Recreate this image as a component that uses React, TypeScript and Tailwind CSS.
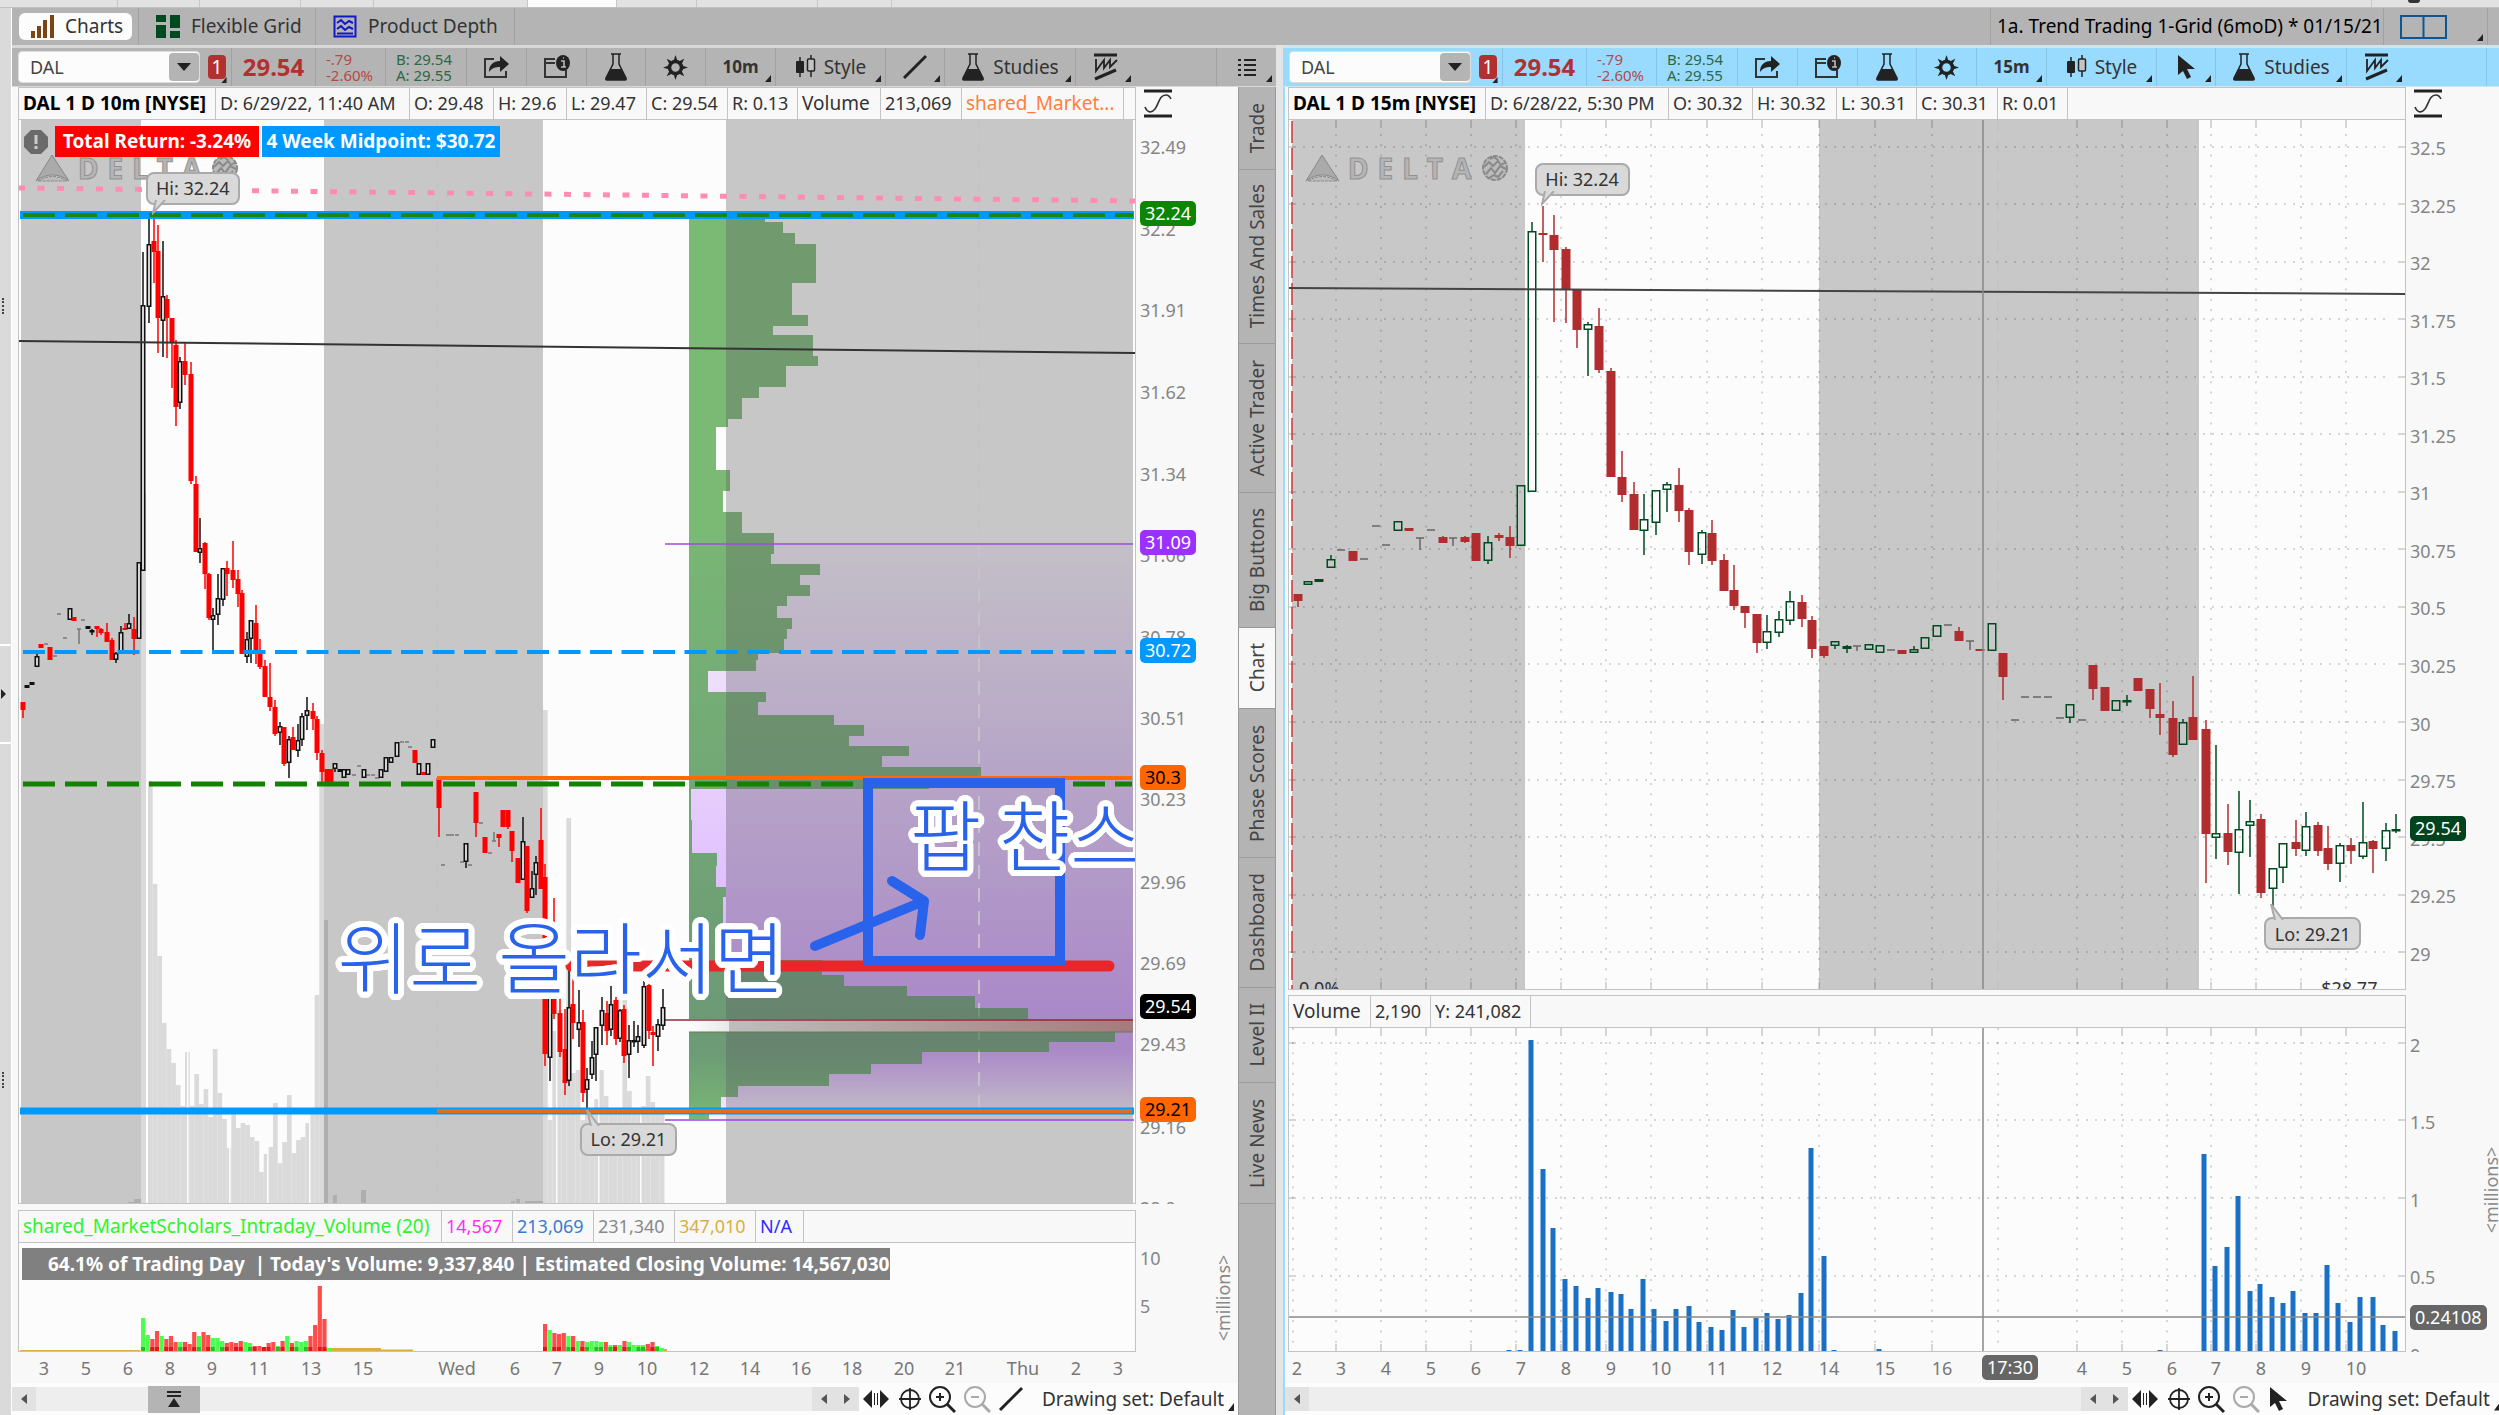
import React from "react";

type Frame = { x: number; y: number; w: number; h: number };
type Candle = [number, number, number, number, number, string];

const LEFT: Frame = { x: 18, y: 120, w: 1118, h: 1084 };
const LEFT_VOL: Frame = { x: 18, y: 1243, w: 1118, h: 109 };
const RIGHT: Frame = { x: 1288, y: 120, w: 1118, h: 870 };
const RIGHT_VOL: Frame = { x: 1288, y: 1028, w: 1118, h: 324 };

const px = (f: Frame, x: number) => ((x - f.x) / f.w) * 100 + "%";
const py = (f: Frame, y: number) => ((y - f.y) / f.h) * 100 + "%";
const box = (f: Frame) => `${f.x} ${f.y} ${f.w} ${f.h}`;

// x, high, body top, body bottom, low, kind (r = down, w = up)
const leftCandles: Candle[] = [
  [23, 702, 702, 710, 718, "r"], [27, 685, 685, 688, 688, "w"], [32, 682, 682, 685, 685, "w"], [37, 653, 656, 667, 667, "w"],
  [41, 644, 644, 648, 648, "r"], [50, 647, 647, 660, 660, "r"], [70, 608, 608, 620, 620, "w"], [74, 617, 617, 621, 621, "r"],
  [88, 626, 626, 629, 629, "w"], [92, 629, 630, 632, 635, "w"], [97, 626, 626, 629, 637, "r"], [101, 628, 629, 633, 635, "r"],
  [107, 623, 632, 642, 642, "r"], [112, 638, 640, 660, 660, "r"], [116, 652, 653, 660, 663, "w"], [121, 626, 632, 652, 652, "w"],
  [125, 623, 628, 630, 630, "r"], [129, 614, 623, 629, 629, "w"], [134, 617, 629, 639, 655, "r"], [139, 562, 562, 639, 639, "w"],
  [143, 252, 305, 571, 571, "w"], [149, 219, 244, 307, 323, "w"], [154, 215, 241, 252, 283, "r"], [158, 225, 251, 318, 353, "r"],
  [163, 241, 296, 321, 357, "w"], [167, 295, 299, 318, 358, "r"], [172, 318, 318, 343, 388, "r"], [176, 340, 345, 407, 426, "r"],
  [180, 357, 361, 403, 409, "w"], [185, 342, 361, 375, 385, "r"], [191, 362, 374, 481, 484, "r"], [196, 476, 484, 552, 552, "r"],
  [200, 518, 548, 553, 563, "w"], [205, 542, 543, 574, 589, "r"], [209, 573, 574, 618, 620, "r"], [213, 608, 615, 620, 651, "w"],
  [218, 574, 598, 615, 625, "w"], [223, 568, 568, 600, 606, "w"], [227, 561, 568, 574, 596, "r"], [233, 541, 570, 580, 588, "r"],
  [238, 570, 579, 594, 607, "r"], [242, 590, 593, 654, 654, "r"], [247, 632, 639, 657, 663, "w"], [251, 620, 620, 639, 663, "w"],
  [256, 605, 623, 654, 664, "r"], [260, 639, 654, 667, 669, "r"], [265, 660, 666, 697, 697, "r"], [270, 663, 697, 707, 711, "r"],
  [275, 700, 707, 734, 736, "r"], [280, 722, 726, 733, 745, "w"], [284, 727, 727, 764, 766, "r"], [289, 736, 739, 763, 778, "w"],
  [293, 727, 737, 750, 750, "r"], [298, 724, 740, 751, 757, "w"], [302, 713, 716, 740, 746, "w"], [307, 697, 710, 716, 730, "w"],
  [313, 703, 711, 719, 730, "r"], [317, 716, 719, 753, 760, "r"], [322, 750, 753, 772, 782, "r"], [327, 769, 769, 782, 782, "r"],
  [331, 769, 769, 782, 782, "r"], [335, 763, 763, 769, 772, "w"], [340, 769, 769, 772, 772, "w"], [344, 769, 769, 778, 778, "w"],
  [348, 769, 769, 775, 775, "w"], [364, 769, 769, 778, 778, "w"], [381, 769, 769, 778, 778, "w"], [386, 757, 757, 772, 772, "w"],
  [391, 757, 757, 763, 763, "w"], [397, 742, 742, 757, 757, "w"], [415, 750, 750, 763, 763, "r"], [419, 763, 763, 775, 775, "w"],
  [424, 772, 772, 775, 775, "r"], [428, 763, 763, 775, 775, "w"], [433, 739, 739, 748, 748, "w"], [439, 778, 778, 808, 837, "r"],
  [466, 843, 843, 862, 868, "w"], [476, 792, 792, 823, 837, "r"], [485, 837, 837, 853, 853, "r"], [499, 834, 834, 838, 847, "r"],
  [503, 810, 810, 827, 827, "r"], [508, 810, 810, 827, 829, "r"], [512, 831, 831, 851, 862, "r"], [518, 858, 858, 883, 883, "r"],
  [523, 817, 841, 880, 880, "w"], [527, 846, 846, 911, 913, "r"], [532, 871, 888, 898, 898, "w"], [536, 856, 862, 875, 895, "w"],
  [541, 808, 840, 889, 889, "r"], [545, 864, 877, 1054, 1066, "r"], [550, 960, 990, 1058, 1081, "w"], [554, 898, 960, 1014, 1019, "r"],
  [560, 990, 1013, 1052, 1057, "r"], [565, 1009, 1049, 1083, 1095, "r"], [569, 970, 1007, 1081, 1086, "w"], [573, 972, 1004, 1023, 1039, "r"],
  [579, 990, 1022, 1030, 1047, "w"], [583, 1010, 1022, 1093, 1102, "r"], [587, 1068, 1079, 1090, 1108, "w"], [592, 1041, 1057, 1075, 1079, "w"],
  [596, 1027, 1027, 1055, 1081, "w"], [602, 997, 1010, 1026, 1045, "w"], [607, 1001, 1013, 1031, 1045, "r"], [611, 986, 1004, 1030, 1036, "w"],
  [616, 997, 1000, 1039, 1045, "r"], [620, 1009, 1010, 1039, 1042, "w"], [624, 1005, 1009, 1056, 1063, "r"], [629, 1025, 1040, 1055, 1078, "w"],
  [634, 1021, 1040, 1042, 1047, "w"], [638, 1025, 1036, 1042, 1053, "w"], [644, 978, 986, 1046, 1048, "w"], [649, 970, 985, 1031, 1039, "r"],
  [653, 1026, 1032, 1035, 1066, "r"], [658, 1019, 1024, 1037, 1051, "w"], [663, 989, 1007, 1026, 1030, "w"],
];

const leftDojis: [number, number][] = [
  [46, 644], [55, 656], [59, 614], [65, 638], [79, 629], [83, 620], [354, 775], [359, 766], [368, 775], [373, 775], [377, 778],
  [402, 742], [407, 742], [410, 747], [443, 865], [448, 835], [452, 835], [457, 835], [462, 862], [470, 865], [481, 823], [490, 853], [494, 841],
];

const rightCandles: Candle[] = [
  [1298, 594, 594, 601, 607, "r"], [1308, 581, 581, 585, 585, "w"], [1319, 579, 579, 582, 582, "w"], [1331, 555, 559, 568, 568, "w"],
  [1353, 551, 551, 561, 561, "r"], [1398, 521, 521, 531, 531, "w"], [1409, 528, 528, 531, 531, "r"], [1443, 536, 537, 543, 543, "r"],
  [1465, 536, 537, 542, 543, "r"], [1476, 533, 533, 561, 561, "r"], [1488, 536, 542, 561, 564, "w"], [1499, 533, 535, 538, 541, "r"],
  [1510, 526, 537, 546, 558, "r"], [1521, 485, 485, 546, 546, "w"], [1532, 222, 231, 492, 492, "w"], [1543, 206, 233, 235, 262, "r"],
  [1554, 215, 235, 250, 322, "r"], [1566, 247, 249, 289, 323, "r"], [1577, 290, 290, 330, 348, "r"], [1588, 322, 324, 330, 376, "w"],
  [1599, 308, 326, 370, 373, "r"], [1611, 368, 371, 477, 477, "r"], [1622, 451, 477, 495, 502, "r"], [1634, 482, 494, 530, 530, "r"],
  [1644, 494, 519, 531, 555, "w"], [1656, 490, 490, 523, 535, "w"], [1667, 482, 484, 490, 512, "w"], [1679, 468, 485, 511, 522, "r"],
  [1689, 508, 510, 552, 565, "r"], [1702, 530, 532, 555, 564, "w"], [1712, 520, 533, 561, 565, "r"], [1724, 554, 560, 591, 591, "r"],
  [1734, 565, 590, 606, 610, "r"], [1745, 606, 606, 613, 628, "r"], [1757, 614, 614, 643, 653, "r"], [1767, 615, 631, 643, 649, "w"],
  [1779, 611, 619, 633, 637, "w"], [1790, 591, 601, 621, 625, "w"], [1802, 595, 602, 619, 627, "r"], [1812, 616, 620, 649, 658, "r"],
  [1824, 646, 646, 656, 658, "r"], [1835, 641, 641, 646, 649, "w"], [1847, 645, 646, 649, 653, "w"], [1869, 644, 644, 650, 650, "w"],
  [1880, 645, 645, 653, 653, "w"], [1902, 650, 650, 654, 654, "r"], [1914, 646, 649, 653, 653, "w"], [1925, 637, 637, 649, 649, "w"],
  [1937, 625, 625, 637, 637, "w"], [1959, 627, 631, 641, 641, "r"], [1980, 649, 649, 651, 651, "r"], [1992, 623, 623, 651, 651, "w"],
  [2003, 653, 653, 677, 700, "r"], [2070, 704, 704, 718, 723, "w"], [2093, 665, 665, 689, 700, "r"], [2105, 687, 687, 711, 711, "r"],
  [2116, 700, 700, 711, 711, "w"], [2127, 695, 700, 702, 706, "w"], [2138, 678, 678, 691, 691, "r"], [2150, 689, 689, 709, 718, "r"],
  [2160, 683, 714, 718, 735, "r"], [2173, 701, 718, 755, 757, "r"], [2183, 719, 722, 745, 745, "w"], [2193, 676, 717, 740, 740, "r"],
  [2206, 720, 729, 834, 883, "r"], [2216, 745, 833, 838, 859, "w"], [2228, 804, 833, 852, 865, "r"], [2239, 791, 829, 853, 894, "w"],
  [2250, 800, 821, 826, 857, "w"], [2261, 814, 819, 893, 898, "r"], [2273, 868, 868, 889, 906, "w"], [2283, 843, 843, 868, 883, "w"],
  [2296, 820, 842, 849, 856, "r"], [2306, 812, 826, 851, 856, "w"], [2318, 822, 825, 851, 856, "r"], [2328, 826, 848, 864, 870, "r"],
  [2340, 843, 845, 864, 882, "w"], [2351, 838, 845, 851, 864, "r"], [2363, 802, 842, 857, 859, "w"], [2373, 840, 841, 849, 873, "r"],
  [2386, 823, 830, 849, 861, "w"], [2396, 814, 829, 831, 833, "w"],
];

const rightDojis: [number, number, number?][] = [
  [1341, 550], [1364, 559], [1376, 526], [1386, 545], [1420, 538, 12], [1431, 530], [1453, 538, 8], [1857, 646, 5], [1891, 650],
  [1948, 625], [1970, 641, 9], [2015, 720], [2025, 697], [2037, 697], [2048, 697], [2060, 718], [2082, 720],
];

const backVolumeA = [781, 884, 956, 1023, 1049, 1063, 1085, 1106, 1052, 1106, 1074, 1104, 1089, 1117, 1049, 1093, 1119, 1148, 1114, 1128, 1123, 1125, 1137, 1141, 1172, 1154, 1147, 1103, 1163, 1142, 1095, 1153, 1140, 1137, 1123, 1114, 995, 724];
const backVolumeB = [710, 1120, 1031, 1010, 1080, 818, 1073, 1070, 1120, 1110, 1110, 1099, 1070, 1096, 1113, 1113, 1113, 992, 1091, 1113, 1113, 1106, 1076, 1102, 1113, 1113];

// volume profile rows: top, right edge
const profile: [number, number][] = [
  [216, 765], [222, 783], [233, 795], [244, 816], [283, 792], [315, 808], [326, 773], [335, 813], [356, 818], [366, 786], [387, 759],
  [398, 742], [419, 728], [427, 716], [470, 730], [491, 723], [512, 742], [533, 774], [554, 771], [564, 820], [575, 800], [585, 810],
  [596, 787], [606, 777], [618, 792], [629, 787], [639, 784], [653, 758], [660, 756], [671, 708], [692, 766], [702, 758], [715, 834],
  [725, 864], [736, 849], [746, 909], [756, 882], [767, 981], [779, 929], [789, 691], [820, 692], [853, 717], [866, 716], [887, 726],
  [897, 723], [927, 728], [960, 822], [975, 844], [986, 907], [996, 975], [1008, 1028], [1019, 1028], [1032, 1115], [1042, 1049],
  [1052, 922], [1064, 871], [1074, 829], [1086, 738], [1097, 721], [1113, 709],
];
const profilePath =
  "M689 216" + profile.map(([y, x], i) => `V${y}H${x}V${profile[i + 1] ? profile[i + 1][0] : 1119}`).join("").replace("V216", "") + "H689Z";

const sessionVolumeA = "g33 g16 r12 r20 g15 r12 r15 r9 g9 r9 r7 r19 g15 r19 r16 g13 g13 g10 r8 r9 r8 r10 g9 g8 r5 r5 r4 r8 r9 g5 r10 g15 r8 g10 g9 g10 r15 r26 r65 r32 g3".split(" ");
const sessionVolumeB = "r27 g21 r18 r17 r18 g15 r15 g10 r10 g9 g10 g10 g9 r9 g6 r6 g6 r10 g9 g6 g6 g6 r7 r9 g5 g3".split(" ");

const rightVolume: [number, number][] = [
  [1509, 1350], [1520, 1350], [1531, 1040], [1543, 1169], [1553, 1228], [1565, 1279], [1576, 1286], [1588, 1298], [1598, 1288],
  [1611, 1292], [1621, 1294], [1631, 1309], [1643, 1279], [1654, 1309], [1666, 1321], [1676, 1309], [1689, 1306], [1699, 1322],
  [1711, 1327], [1722, 1330], [1733, 1310], [1744, 1327], [1756, 1318], [1767, 1313], [1778, 1319], [1789, 1315], [1801, 1293],
  [1811, 1148], [1824, 1256], [1834, 1350], [1879, 1349], [2160, 1350], [2204, 1154], [2215, 1266], [2227, 1247], [2238, 1196],
  [2250, 1291], [2260, 1284], [2272, 1297], [2283, 1303], [2293, 1291], [2305, 1313], [2316, 1313], [2327, 1265], [2338, 1303],
  [2350, 1322], [2360, 1297], [2373, 1297], [2383, 1325], [2395, 1331],
];

const gridX = [1336, 1381, 1426, 1471, 1516, 1561, 1606, 1651, 1707, 1762, 1819, 1875, 1932, 2077, 2122, 2167, 2211, 2256, 2301, 2346];
const gridY = Array.from({ length: 15 }, (_, i) => Math.round(146.5 + i * 57.55));

const leftPrices: [string, number][] = [
  ["32.49", 147], ["32.2", 229], ["31.91", 310], ["31.62", 392], ["31.34", 474], ["31.06", 555], ["30.78", 637], ["30.51", 718],
  ["30.23", 799], ["29.96", 882], ["29.69", 963], ["29.43", 1044], ["29.16", 1127], ["28.9", 1208],
];
const leftTags: [string, number, string][] = [
  ["32.24", 213, "bg-[#0d8500] text-white"], ["31.09", 542, "bg-[#9b30ff] text-white"], ["30.72", 650, "bg-[#0099ff] text-white"],
  ["30.3", 777, "bg-[#ff6600] text-black"], ["29.54", 1006, "bg-black text-white"], ["29.21", 1109, "bg-[#ff6600] text-black"],
];
const rightPrices: [string, number][] = Array.from({ length: 15 }, (_, i) => [String(32.5 - i * 0.25), Math.round(148 + i * 57.55)]);

const leftTimes: [string, number][] = [
  ["3", 44], ["5", 86], ["6", 128], ["8", 170], ["9", 212], ["11", 259], ["13", 311], ["15", 363], ["Wed", 457], ["6", 515], ["7", 557],
  ["9", 599], ["10", 647], ["12", 699], ["14", 750], ["16", 801], ["18", 852], ["20", 904], ["21", 955], ["Thu", 1023], ["2", 1076], ["3", 1118],
];
const rightTimes: [string, number][] = [
  ["2", 1297], ["3", 1341], ["4", 1386], ["5", 1431], ["6", 1476], ["7", 1521], ["8", 1566], ["9", 1611], ["10", 1661], ["11", 1717],
  ["12", 1772], ["14", 1829], ["15", 1885], ["16", 1942], ["4", 2082], ["5", 2127], ["6", 2172], ["7", 2216], ["8", 2261], ["9", 2306], ["10", 2356],
];

const sideTabs: [string, string][] = [
  ["Trade", "h-[83px]"], ["Times And Sales", "h-[174px]"], ["Active Trader", "h-[149px]"], ["Big Buttons", "h-[135px]"], ["Chart", "h-[81px]"],
  ["Phase Scores", "h-[149px]"], ["Dashboard", "h-[130px]"], ["Level II", "h-[95px]"], ["Live News", "h-[121px]"],
];

/* ---------- icons ---------- */

const ShareIcon = () => (
  <svg width="27" height="24" viewBox="0 0 27 24">
    <path d="M11 4H2v18h21v-6" fill="none" stroke="#333" strokeWidth="2" />
    <path d="M6 17c0-7 4-11 11-11V1l9 8-9 8v-5c-5 0-8 1-11 5z" fill="#222" />
  </svg>
);
const NoteIcon = () => (
  <svg width="27" height="24" viewBox="0 0 27 24">
    <path d="M12 4H2v18h21v-7M2 8h10" fill="none" stroke="#333" strokeWidth="2" />
    <ellipse cx="20" cy="8" rx="7" ry="8" fill="#222" />
    <path d="M18 6h3v6M18 12h5M20 3h1" stroke="#bbb" strokeWidth="1.6" fill="none" />
  </svg>
);
const FlaskIcon = () => (
  <svg width="24" height="28" viewBox="0 0 24 28">
    <path d="M7 1h10M9 1v10L2 25c-.5 1.500 0 2 1 2h18c1 0 1.500-.5 1-2L15 11V1" fill="none" stroke="#222" strokeWidth="1.500" />
    <path d="M7 16h10l5 9c.5 1.500 0 2-1 2H3c-1 0-1.500-.5-1-2z" fill="#222" />
  </svg>
);
const GearIcon = () => (
  <svg width="25" height="25" viewBox="0 0 25 25">
    <circle cx="12.500" cy="12.500" r="6" fill="none" stroke="#222" strokeWidth="3.500" />
    {[0, 45, 90, 135, 180, 225, 270, 315].map((a) => (
      <path key={a} d="M10.500 6 12.500 0l2 6z" fill="#222" transform={`rotate(${a} 12.5 12.5)`} />
    ))}
  </svg>
);
const CandleIcon = () => (
  <svg width="21" height="24" viewBox="0 0 21 24">
    <path d="M5 2v20M16 0v22" stroke="#222" strokeWidth="1.500" />
    <rect x="1" y="6" width="8" height="12" rx="1" fill="#222" />
    <rect x="12.500" y="4" width="7" height="12" rx="1" fill="#c4c4c4" stroke="#222" strokeWidth="1.500" />
  </svg>
);
const PenIcon = () => (
  <svg width="26" height="26" viewBox="0 0 26 26">
    <path d="M2 24 24 2" stroke="#222" strokeWidth="3" />
  </svg>
);
const CursorIcon = () => (
  <svg width="19" height="24" viewBox="0 0 19 24">
    <path d="M1 0v20l5-4 4 8 4-2-4-8h8z" fill="#222" />
  </svg>
);
const PatternIcon = () => (
  <svg width="25" height="28" viewBox="0 0 25 28">
    <path d="M1 2h23" stroke="#222" strokeWidth="3" />
    <path d="M3 6v12l8-11v8l6-8v7l7-7" fill="none" stroke="#222" strokeWidth="1.800" />
    <path d="M2 26l21-9" stroke="#222" strokeWidth="3" />
  </svg>
);
const ListIcon = () => (
  <svg width="18" height="19" viewBox="0 0 18 19">
    <path d="M0 2h3M0 7h3M0 12h3M0 17h3M6 2h12M6 7h12M6 12h12M6 17h12" stroke="#222" strokeWidth="2" />
  </svg>
);
const WaveIcon = () => (
  <svg width="28" height="30" viewBox="0 0 28 30">
    <path d="M0 2h28M0 27h28" stroke="#222" strokeWidth="3" />
    <path d="M1 18c2 5 6 7 10 2s4-14 11-14c2 0 4 2 5 4" fill="none" stroke="#333" strokeWidth="1.600" />
  </svg>
);
const Corner = () => (
  <svg width="6" height="7" viewBox="0 0 6 7" className="absolute right-1 bottom-1">
    <path d="M6 0v7H0z" fill="#222" />
  </svg>
);
const ZoomIcon = ({ minus }: { minus?: boolean }) => (
  <svg width="28" height="28" viewBox="0 0 28 28" fill="none" stroke={minus ? "#aaa" : "#222"} strokeWidth="2">
    <circle cx="12" cy="12" r="10" />
    <path d="m19 19 8 8" strokeWidth="3" />
    <path d={minus ? "M8 12h8" : "M8 12h8M12 8v8"} />
  </svg>
);

/* ---------- toolbar ---------- */

const Cell = ({ w, children }: { w: string; children?: React.ReactNode }) => (
  <div className={`relative flex h-full shrink-0 items-center justify-center border-r border-black/10 ${w}`}>{children}</div>
);
const ToolButton = ({ w, label, corner, children }: { w: string; label: string; corner?: boolean; children: React.ReactNode }) => (
  <button aria-label={label} className={`relative flex h-full shrink-0 items-center justify-center gap-2 border-r border-black/10 ${w}`}>
    {children}
    {corner && <Corner />}
  </button>
);

function Toolbar({ period, active }: { period: string; active?: boolean }) {
  return (
    <div className={`flex h-[42px] items-center border-t-[3px] border-b ${active ? "border-[#d0e4ee] bg-[#99dbff]" : "border-[#d8d8d8] bg-[#b4b4b4]"}`}>
      <div className="flex h-full w-[220px] shrink-0 items-center border-r border-black/10 pl-[6px]">
        <div className="flex h-8 w-[182px] items-center rounded-sm border border-[#ddd] bg-[#fcfcfc]">
          <input aria-label="Symbol" defaultValue="DAL" className="w-full min-w-0 flex-1 bg-transparent pl-[11px] text-[18px] text-[#444] outline-none" />
          <button aria-label="Open symbol list" className="flex h-7 w-[30px] items-center justify-center rounded-sm bg-[#b4b4b4]">
            <svg width="14" height="8" viewBox="0 0 14 8"><path d="M0 0h14L7 8z" fill="#222" /></svg>
          </button>
        </div>
        <button aria-label="Link color" className="relative ml-2 h-6 w-[18px] rounded-sm bg-[#b33030] text-[19px] leading-6 text-white">
          1
          <svg width="6" height="6" viewBox="0 0 6 7" className="absolute -right-px -bottom-1"><path d="M6 0v7H0z" fill="#222" /></svg>
        </button>
      </div>
      <Cell w="w-[84px]"><span className="text-[24px] font-bold text-[#b33030]">29.54</span></Cell>
      <Cell w="w-[70px]"><div className="w-full pl-[10px] text-[15px] leading-4 text-[#b84848]"><p>-.79</p><p>-2.60%</p></div></Cell>
      <Cell w="w-[81px]"><div className="w-full pl-[10px] text-[15px] leading-4 whitespace-nowrap text-[#2c6843]"><p>B: 29.54</p><p>A: 29.55</p></div></Cell>
      <ToolButton w="w-[60px]" label="Share"><ShareIcon /></ToolButton>
      <ToolButton w="w-[60px]" label="Note"><NoteIcon /></ToolButton>
      <ToolButton w="w-[59px]" label="Quick study"><FlaskIcon /></ToolButton>
      <ToolButton w="w-[60px]" label="Settings"><GearIcon /></ToolButton>
      <ToolButton w="w-[70px]" label="Time frame" corner><span className="text-[17px] font-bold text-[#333]">{period}</span></ToolButton>
      <ToolButton w="w-[110px]" label="Style" corner><CandleIcon /><span className="text-[19px] text-[#333]">Style</span></ToolButton>
      <ToolButton w="w-[59px]" label="Drawings" corner>{active ? <CursorIcon /> : <PenIcon />}</ToolButton>
      <ToolButton w="w-[131px]" label="Studies" corner><FlaskIcon /><span className="text-[19px] text-[#333]">Studies</span></ToolButton>
      <div className="flex h-full min-w-0 flex-1 border-r border-black/10">
        <button aria-label="Patterns" className="relative flex h-full w-[59px] items-center justify-center"><PatternIcon /><Corner /></button>
      </div>
      {active ? <div className="w-3" /> : <button aria-label="Menu" className="relative flex h-full w-[59px] items-center justify-center"><ListIcon /><Corner /></button>}
    </div>
  );
}

const Info = ({ w, className = "text-[#333]", children }: { w: string; className?: string; children: React.ReactNode }) => (
  <span className={`flex h-full shrink-0 items-center border-r border-[#c3c3c3] pl-1 whitespace-nowrap ${w} ${className}`}>{children}</span>
);
const InfoRow = ({ children }: { children: React.ReactNode }) => (
  <div className="flex h-[33px] overflow-hidden border border-[#c3c3c3] bg-[#f8f8f8] text-[18px]">{children}</div>
);

/* ---------- chart pieces ---------- */

// the panel border lies outside the padding box, so the drawing is grown over it
const Plot = ({ f, children }: { f: Frame; children: React.ReactNode }) => (
  <svg viewBox={box(f)} preserveAspectRatio="none" className="absolute top-0 -left-px h-[calc(100%+1px)] w-[calc(100%+2px)]">{children}</svg>
);

const Candles = ({ data, half, up, down, hollow }: { data: Candle[]; half: number; up: string; down: string; hollow: string }) => (
  <g>
    {data.map(([x, hi, top, bottom, lo, kind], i) => {
      const c = kind === "r" ? down : up;
      return (
        <g key={i}>
          {hi < top && <path d={`M${x} ${hi}V${top}`} stroke={c} strokeWidth="1.500" />}
          {lo > bottom && <path d={`M${x} ${bottom}V${lo}`} stroke={c} strokeWidth="1.500" />}
          {kind === "r" ? (
            <rect x={x - half} y={top} width={half * 2} height={bottom - top} fill={c} />
          ) : (
            <rect x={x - half + 0.75} y={top + 0.75} width={half * 2 - 1.5} height={Math.max(bottom - top - 1.5, 1)} fill={hollow} stroke={c} strokeWidth="1.500" />
          )}
        </g>
      );
    })}
  </g>
);

const Callout = ({ f, x, y, w, tip, children }: { f: Frame; x: number; y: number; w: string; tip: "top" | "bottom"; children: string }) => (
  <div className={`absolute flex h-[33px] items-center justify-center rounded-lg border-2 border-[#aaa] bg-[#d9d9d9] text-[18px] text-[#333] ${w}`} style={{ left: px(f, x), top: py(f, y) }}>
    {children}
    <svg width="14" height="16" viewBox="0 0 14 16" className={tip === "top" ? "absolute -top-[15px] left-1" : "absolute -bottom-[13px] left-1"}>
      <path d={tip === "top" ? "M5 16 1 0l12 16" : "M4 0 1 13 13 0"} fill="#d9d9d9" stroke="#aaa" strokeWidth="2" />
    </svg>
  </div>
);

const DeltaLogo = ({ f, x }: { f: Frame; x: number }) => (
  <div className="absolute flex h-7 items-center" style={{ left: px(f, x), top: py(f, 154) }}>
    <svg width="36" height="28" viewBox="0 0 36 28">
      <path d="M17 1 1 27c10-8 23-8 33 0z" fill="#aaa" stroke="#888" />
      <path d="M3 27c9-6 20-6 29 0z" fill="#bbb" stroke="#888" strokeDasharray="3 1" />
    </svg>
    <span className="ml-[7px] flex gap-[9px] text-[28px] leading-7 font-bold text-[#b5b5b5] [-webkit-text-stroke:1px_#929292]">
      <span>D</span><span>E</span><span>L</span><span>T</span><span>A</span>
    </span>
    <svg width="28" height="28" viewBox="0 0 28 28" className="ml-[10px]">
      <circle cx="14" cy="14" r="12" fill="#bbb" stroke="#8a8a8a" strokeWidth="2" strokeDasharray="5 1" />
      <path d="M3 13l5-5 4 4 5-5 3 4 5-3M5 20l5-6 4 5 5-7 6 3M8 24l5-3 4 2 5-6M9 5l4-2 4 3" fill="none" stroke="#8a8a8a" strokeWidth="2" />
    </svg>
  </div>
);

// white halo with round corners round the blue handwriting
const halo = Array.from({ length: 32 }, (_, i) => {
  const a = (i / 32) * Math.PI * 2;
  return `${(Math.cos(a) * 6).toFixed(1)}px ${(Math.sin(a) * 6).toFixed(1)}px 0 #fff`;
}).join(", ");

const Handwriting = ({ x, y, children }: { x: number; y: number; children: string }) => (
  <p className="absolute font-['Noto_Sans_CJK_KR',sans-serif] text-[78px] leading-[78px] font-light whitespace-nowrap text-[#2962eb]" style={{ left: px(LEFT, x), top: py(LEFT, y), textShadow: halo }}>{children}</p>
);

const Tag = ({ top, tone, children }: { top: string; tone: string; children: string }) => (
  <span className={`absolute left-1 -mt-3 h-[25px] rounded-[5px] px-[5px] text-[18px] leading-6 ${tone}`} style={{ top }}>{children}</span>
);

function PriceAxis({ f, labels, children }: { f: Frame; labels: [string, number][]; children?: React.ReactNode }) {
  return (
    <div className="relative overflow-hidden bg-[#f8f8f8] text-[18px] leading-6 text-[#858585]">
      {labels.map(([t, y]) => (
        <span key={t} className="absolute left-1 -mt-3" style={{ top: py(f, y) }}>{t}</span>
      ))}
      {children}
    </div>
  );
}

const TimeAxis = ({ f, labels, children }: { f: Frame; labels: [string, number][]; children?: React.ReactNode }) => (
  <div className="relative text-[18px] leading-[33px] text-[#777]">
    {labels.map(([t, x], i) => (
      <span key={i} className="absolute -translate-x-1/2" style={{ left: px(f, x) }}>{t}</span>
    ))}
    {children}
  </div>
);

const Millions = ({ edge }: { edge: string }) => (
  <span className={`absolute top-1/2 -translate-y-1/2 rotate-180 text-[18px] leading-6 text-[#888] [writing-mode:vertical-rl] ${edge}`}>&lt;millions&gt;</span>
);

const arrow = (d: string) => <svg width="6" height="10" viewBox="0 0 6 10"><path d={d} fill="#555" /></svg>;

function BottomBar({ active }: { active?: boolean }) {
  return (
    <div className={`col-span-2 flex items-center overflow-hidden bg-[#fcfcfc] ${active ? "-ml-[3px]" : "-ml-[6px]"}`}>
      <div className="flex h-6 min-w-0 flex-1 items-center bg-[#eee]">
        <button aria-label="Scroll left" className="flex h-6 w-6 items-center justify-center bg-[#e2e2e2]">{arrow("M6 0v10L0 5z")}</button>
        {!active && (
          <button aria-label="Expand panel" className="ml-[112px] flex h-[27px] w-[52px] items-center justify-center bg-[#b4b4b4]">
            <svg width="16" height="16" viewBox="0 0 16 16"><path d="M1 1h14M1 5h14" stroke="#222" strokeWidth="2" /><path d="M8 7l6 9H2z" fill="#222" /></svg>
          </button>
        )}
        <div className="ml-auto flex h-6 w-[47px] items-center justify-around bg-[#e2e2e2]">
          <button aria-label="Step left">{arrow("M6 0v10L0 5z")}</button>
          <button aria-label="Step right">{arrow("M0 0v10l6-5z")}</button>
        </div>
      </div>
      <div className={`flex shrink-0 items-center ${active ? "w-[371px]" : "w-[379px]"}`}>
        <button aria-label="Fit" className="ml-1">
          <svg width="26" height="18" viewBox="0 0 26 18"><path d="M9 0v18L0 9zM17 0v18l9-9zM11 3h1v12h-1zM14 3h1v12h-1z" fill="#222" /></svg>
        </button>
        <button aria-label="Crosshair" className="ml-[10px]">
          <svg width="22" height="22" viewBox="0 0 22 22" fill="none" stroke="#222" strokeWidth="1.800"><circle cx="11" cy="11" r="9" /><path d="M11 0v22M0 11h22" /></svg>
        </button>
        <button aria-label="Zoom in" className="ml-[7px]"><ZoomIcon /></button>
        <button aria-label="Zoom out" className="ml-[7px]"><ZoomIcon minus /></button>
        <button aria-label="Pointer" className="ml-[7px] flex w-[26px] justify-center">{active ? <CursorIcon /> : <PenIcon />}</button>
        <button className="ml-[18px] text-[19px] whitespace-nowrap text-[#333]">Drawing set: Default</button>
        <svg width="6" height="8" viewBox="0 0 6 8" className="mt-4 ml-1"><path d="M6 0v8H0z" fill="#222" /></svg>
      </div>
    </div>
  );
}

/* ---------- left chart ---------- */

function LeftPriceChart() {
  const f = LEFT;
  return (
    <div className="relative overflow-hidden border-r border-b border-l border-[#c3c3c3] bg-[#fcfcfc]">
      <Plot f={f}>
        <defs>
          <linearGradient id="area" x1="0" x2="0" y1="0" y2="1">
            <stop offset="0" stopColor="#9b30ff" stopOpacity="0.05" />
            <stop offset="0.83" stopColor="#9b30ff" stopOpacity="0.39" />
            <stop offset="0.88" stopColor="#9b30ff" stopOpacity="0.38" />
            <stop offset="1" stopColor="#9b30ff" stopOpacity="0.04" />
          </linearGradient>
          <linearGradient id="band" x1="0" x2="1" y1="0" y2="0">
            <stop offset="0" stopColor="#fcfcfc" />
            <stop offset="0.09" stopColor="#e9e9e9" />
            <stop offset="0.09" stopColor="#bdbdbd" />
            <stop offset="1" stopColor="#a57b7c" />
          </linearGradient>
          <clipPath id="profileDay"><rect x="680" y="200" width="46" height="940" /></clipPath>
          <clipPath id="profileNight"><rect x="726" y="200" width="410" height="940" /></clipPath>
        </defs>
        {backVolumeA.map((y, i) => <rect key={i} x={148 + i * 4.63} y={y} width="4.700" height={1204 - y} fill="#dadada" />)}
        {backVolumeB.map((y, i) => <rect key={i} x={543 + i * 4.67} y={y} width="4.700" height={1204 - y} fill="#dadada" />)}
        <rect x="141" y="493" width="5" height="711" fill="#dadada" />
        {[147, 188, 230, 268, 310, 557, 599, 641].map((x) => <rect key={x} x={x - 1} y="1010" width="1.500" height="194" fill="#fcfcfc" />)}
        <rect x="689" y="543" width="444" height="577" fill="url(#area)" />
        {[[21, 120], [324, 219], [726, 407]].map(([x, w]) => <rect key={x} x={x} y="120" width={w} height="1084" fill="#000" fillOpacity="0.206" />)}
        <path d="M437 120V1204M979 120V540" stroke="#c2c2c2" strokeDasharray="12 8" />
        <path d="M979 543V1110" stroke="#c6c2c8" strokeWidth="2" strokeDasharray="14 9" />
        <path d="M324 920h4v284h-4zM333 1195h4v9h-4zM361 1190h5v14h-5zM128 1202h8v2h-8zM134 1199h7v5h-7zM511 1201h4v3h-4zM516 1199h4v5h-4zM525 1201h18v3h-18z" fill="#aeaeae" />
        <path d={profilePath} fill="#248e1a" fillOpacity="0.6" clipPath="url(#profileDay)" />
        <path d={profilePath} fill="#3f823a" fillOpacity="0.63" clipPath="url(#profileNight)" />
        <rect x="689" y="1019" width="444" height="13" fill="url(#band)" />
        <path d="M665 1020H1133" stroke="#8f2a38" strokeWidth="1.500" />
        <path d="M689 1032H1133" stroke="#6b7a55" />

        <path d="M18 188 1136 201" stroke="#ff8cb4" strokeWidth="5" strokeDasharray="7 12.500" />
        {leftDojis.map(([x, y], i) => <path key={i} d={`M${x - 2} ${y}h4`} stroke="#777" strokeWidth="1.500" />)}
        <path d="M79 629v15M494 832v9" stroke="#777" strokeWidth="1.500" />
        <Candles data={leftCandles} half={2.5} up="#111" down="#ff0000" hollow="#d4d4d4" />
        <path d="M18 341 1136 353" stroke="#333" strokeWidth="2" />
        <path d="M665 544H1133" stroke="#a04be0" strokeWidth="1.500" />
        <path d="M20 215H1134" stroke="#0099ff" strokeWidth="8" />
        <path d="M23 215H1133" stroke="#128a14" strokeWidth="4" strokeDasharray="32 10" />
        <path d="M23 652H1132" stroke="#0099ff" strokeWidth="4" strokeDasharray="22 9.500" />
        <path d="M23 784H1132" stroke="#128200" strokeWidth="5" strokeDasharray="32 10" />
        <path d="M437 778H1132" stroke="#ff6a00" strokeWidth="4" />
        <path d="M20 1111H1134" stroke="#0099ff" strokeWidth="7" />
        <path d="M437 1111H1132" stroke="#dd6f20" strokeWidth="4" />
        <path d="M665 1120H1134" stroke="#a040f0" strokeWidth="1.500" />

        <path d="M571 966H1109" stroke="#e9262a" strokeWidth="11" strokeLinecap="round" />
        <rect x="868" y="783" width="192" height="178" fill="none" stroke="#2962eb" strokeWidth="10" />
        <path d="M815 946 924 901M892 881l32 20-4 34" fill="none" stroke="#2962eb" strokeWidth="10" strokeLinecap="round" strokeLinejoin="round" />
      </Plot>
      <DeltaLogo f={f} x={34} />
      <div className="absolute top-[6px] left-1 flex items-center gap-[3px] text-[19px] leading-[31px] font-bold whitespace-nowrap text-white">
        <svg width="27" height="26" viewBox="0 0 27 26" className="mr-[2px]">
          <path d="M8 1h10l7 7v10l-7 7H8l-7-7V8z" fill="#6a6a6a" />
          <path d="M13 6v9M13 17v3" stroke="#ccc" strokeWidth="3" />
        </svg>
        <span className="w-[204px] bg-[#ff0000] text-center">Total Return: -3.24%</span>
        <span className="w-[238px] bg-[#0099ff] text-center">4 Week Midpoint: $30.72</span>
      </div>
      <Callout f={f} x={145} y={172} w="w-[94px]" tip="bottom">Hi: 32.24</Callout>
      <Callout f={f} x={580} y={1124} w="w-[97px]" tip="top">Lo: 29.21</Callout>
      <Handwriting x={337} y={916}>위로 올라서면</Handwriting>
      <Handwriting x={910} y={794}>팝 챤스</Handwriting>
    </div>
  );
}

const SessionBars = ({ bars, x0, step }: { bars: string[]; x0: number; step: number }) => (
  <g>
    {bars.map((b, i) => {
      const h = Number(b.slice(1));
      return <rect key={i} x={x0 + i * step} y={1351 - h} width="4.200" height={h} fill={b[0] === "g" ? "#4dff4d" : "#ff4d4d"} />;
    })}
    {bars.map((b, i) => i % 3 !== 1 && <rect key={i} x={x0 + i * step} y={1351 - Math.min(Number(b.slice(1)), 4)} width="4" height="4" fill={b[0] === "g" ? "#22c022" : "#e01818"} />)}
  </g>
);

function LeftPanel() {
  return (
    <section className="flex min-w-0 grow-[1264] basis-0 flex-col">
      <Toolbar period="10m" />
      <div className="flex min-h-0 flex-1">
        <div className="grid min-w-0 flex-1 grid-cols-[minmax(0,1fr)_102px] grid-rows-[33px_minmax(0,1fr)_6px_33px_109px_31px_32px] bg-[#f8f8f8] pl-[6px]">
          <InfoRow>
            <Info w="w-[197px]" className="text-[19px] font-bold text-black">DAL 1 D 10m [NYSE]</Info>
            <Info w="w-[194px]">D: 6/29/22, 11:40 AM</Info>
            <Info w="w-[84px]">O: 29.48</Info>
            <Info w="w-[73px]">H: 29.6</Info>
            <Info w="w-[80px]">L: 29.47</Info>
            <Info w="w-[81px]">C: 29.54</Info>
            <Info w="w-[70px]">R: 0.13</Info>
            <Info w="w-[83px]" className="text-[19px] text-[#333]">Volume</Info>
            <Info w="w-[81px]">213,069</Info>
            <Info w="w-[162px]" className="text-[19px] text-[#ff7f3f]">shared_Market...</Info>
          </InfoRow>
          <div className="pt-[2px] pl-2"><WaveIcon /></div>
          <LeftPriceChart />
          <PriceAxis f={LEFT} labels={leftPrices}>
            {leftTags.map(([t, y, tone]) => <Tag key={t} top={py(LEFT, y)} tone={tone}>{t}</Tag>)}
          </PriceAxis>
          <div className="col-span-2" />
          <InfoRow>
            <Info w="w-[423px]" className="text-[19px] text-[#2cf52c]">shared_MarketScholars_Intraday_Volume (20)</Info>
            <Info w="w-[71px]" className="text-[#ff2cf5]">14,567</Info>
            <Info w="w-[81px]" className="text-[#3a7bd0]">213,069</Info>
            <Info w="w-[81px]" className="text-[#888]">231,340</Info>
            <Info w="w-[81px]" className="text-[#d8b040]">347,010</Info>
            <Info w="w-[48px]" className="text-[#2c2cff]">N/A</Info>
          </InfoRow>
          <div />
          <div className="relative overflow-hidden border-r border-b border-l border-[#c3c3c3] bg-[#fcfcfc]">
            <Plot f={LEFT_VOL}>
              <path d="M20 1350H140v2H20zM325 1348h56v1.500h32v1.500H540v1H325zM640 1349h27v3h-27z" fill="#d8b040" />
              <SessionBars bars={sessionVolumeA} x0={141} step={4.65} />
              <SessionBars bars={sessionVolumeB} x0={543} step={4.67} />
            </Plot>
            <p className="absolute top-[5px] left-[3px] bg-[#808080] pr-px pl-[26px] text-[19px] leading-8 font-bold whitespace-pre text-white">64.1% of Trading Day  | Today's Volume: 9,337,840 | Estimated Closing Volume: 14,567,030</p>
          </div>
          <PriceAxis f={LEFT_VOL} labels={[["10", 1258], ["5", 1306]]}><Millions edge="right-[3px]" /></PriceAxis>
          <TimeAxis f={LEFT} labels={leftTimes} />
          <div />
          <BottomBar />
        </div>
        <nav className="flex w-[38px] shrink-0 flex-col overflow-hidden border-r border-l border-[#9a9a9a] bg-[#b4b4b4]">
          {sideTabs.map(([name, h]) => (
            <button key={name} className={`flex shrink-0 items-center justify-center border-b border-[#9a9a9a] ${h} ${name === "Chart" ? "bg-[#f8f8f8]" : ""}`}>
              <span className="rotate-180 text-[19px] leading-6 whitespace-nowrap text-[#444] [writing-mode:vertical-rl]">{name}</span>
            </button>
          ))}
        </nav>
      </div>
    </section>
  );
}

/* ---------- right chart ---------- */

const Grid = ({ top, bottom, rows }: { top: number; bottom: number; rows: number[] }) => (
  <g stroke="#000" strokeOpacity="0.2" strokeWidth="1.500">
    {gridX.map((x) => (
      <g key={x}>
        <path d={`M${x} ${top + 14}V${bottom}`} strokeDasharray="2 8.300" />
        <path d={`M${x} ${top}v8M${x} ${bottom - 8}v8`} />
      </g>
    ))}
    {rows.map((y) => (
      <g key={y}>
        <path d={`M1303 ${y}H2392`} strokeDasharray="2 7" />
        <path d={`M1288 ${y}h8M2398 ${y}h8`} />
      </g>
    ))}
  </g>
);

function RightPriceChart() {
  const f = RIGHT;
  return (
    <div className="relative overflow-hidden border-r border-b border-l border-[#c3c3c3] bg-[#fcfcfc] text-[18px] leading-6 text-[#333]">
      <Plot f={f}>
        <path d="M1292 120H1525V990H1292zM1819 120H2199V990H1819z" fill="#c8c8c8" />
        <Grid top={120} bottom={990} rows={gridY} />
        <path d="M1998 120V990" stroke="#bebebe" strokeDasharray="12 8" />
        <path d="M1292 121V990" stroke="#d0353a" strokeWidth="1.500" strokeDasharray="22 5" />
        {rightDojis.map(([x, y, leg = 0], i) => <path key={i} d={`M${x - 4} ${y}h8M${x} ${y}v${leg}`} stroke="#666" strokeWidth="1.500" fill="none" />)}
        <Candles data={rightCandles} half={4.5} up="#004a20" down="#b02c2f" hollow="none" />
        <path d="M1288 288 2406 294" stroke="#444" strokeWidth="2" />
        <path d="M1983 120V990" stroke="#888" strokeWidth="1.500" />
      </Plot>
      <DeltaLogo f={f} x={1304} />
      <Callout f={f} x={1534} y={163} w="w-[95px]" tip="bottom">Hi: 32.24</Callout>
      <Callout f={f} x={2265} y={918} w="w-[97px]" tip="top">Lo: 29.21</Callout>
      <span className="absolute -mt-3" style={{ left: px(f, 1298), top: py(f, 989) }}>0.0%</span>
      <span className="absolute -mt-3" style={{ left: px(f, 2322), top: py(f, 989) }}>$28.77</span>
    </div>
  );
}

function RightPanel() {
  return (
    <section className="flex min-w-0 grow-[1216] basis-0 flex-col">
      <Toolbar period="15m" active />
      <div className="grid min-h-0 flex-1 grid-cols-[minmax(0,1fr)_93px] grid-rows-[33px_minmax(0,870fr)_5px_33px_minmax(0,324fr)_31px_32px] border-l-2 border-[#99dbff] bg-[#f8f8f8] pl-[3px]">
        <InfoRow>
          <Info w="w-[197px]" className="text-[19px] font-bold text-black">DAL 1 D 15m [NYSE]</Info>
          <Info w="w-[183px]">D: 6/28/22, 5:30 PM</Info>
          <Info w="w-[84px]">O: 30.32</Info>
          <Info w="w-[84px]">H: 30.32</Info>
          <Info w="w-[80px]">L: 30.31</Info>
          <Info w="w-[81px]">C: 30.31</Info>
          <Info w="w-[70px]">R: 0.01</Info>
        </InfoRow>
        <div className="pt-[2px] pl-2"><WaveIcon /></div>
        <RightPriceChart />
        <PriceAxis f={RIGHT} labels={rightPrices}>
          <Tag top={py(RIGHT, 828)} tone="bg-[#00431e] text-white">29.54</Tag>
        </PriceAxis>
        <div className="col-span-2" />
        <InfoRow>
          <Info w="w-[82px]" className="text-[19px] text-[#333]">Volume</Info>
          <Info w="w-[60px]">2,190</Info>
          <Info w="w-[100px]">Y: 241,082</Info>
        </InfoRow>
        <div />
        <div className="relative overflow-hidden border-r border-b border-l border-[#c3c3c3] bg-[#fcfcfc]">
          <Plot f={RIGHT_VOL}>
            <Grid top={1028} bottom={1352} rows={[1043, 1120, 1198, 1276]} />
            <g stroke="#000" strokeOpacity="0.2" strokeWidth="1.500">
              {[1293, 1998].map((x) => <path key={x} d={`M${x} 1028v8m0 6V1344`} strokeDasharray="2 8.300" />)}
            </g>
            {rightVolume.map(([x, y]) => <rect key={x} x={x - 2.5} y={y} width="5" height={1352 - y} fill="#1a70c4" />)}
            <path d="M1288 1317H2406M1983 1028V1352" stroke="#888" strokeWidth="1.500" />
          </Plot>
        </div>
        <PriceAxis f={RIGHT_VOL} labels={[["2", 1045], ["1.5", 1122], ["1", 1200], ["0.5", 1277], ["0", 1355]]}>
          <Tag top={py(RIGHT_VOL, 1317)} tone="bg-[#666] text-white">0.24108</Tag>
          <Millions edge="-right-1" />
        </PriceAxis>
        <TimeAxis f={RIGHT} labels={rightTimes}>
          <span className="absolute top-[3px] h-[25px] rounded-[5px] bg-[#666] px-[5px] leading-6 text-white" style={{ left: px(RIGHT, 1982) }}>17:30</span>
        </TimeAxis>
        <div />
        <BottomBar active />
      </div>
    </section>
  );
}

/* ---------- page ---------- */

const topCells = ["w-[118px]", "w-[82px]", "w-[101px]", "w-[73px]", "w-[154px]", "w-[89px] bg-[#fcfcfc]", "w-[80px]", "w-[121px]", "w-[74px]"];

export default function App() {
  return (
    <div className="flex h-screen flex-col overflow-hidden bg-[#e2e2e2] font-['Noto_Sans',sans-serif]">
      <div className="flex h-2 shrink-0 border-b border-[#c0c0c0]">
        {topCells.map((c) => <div key={c} className={`border-r border-[#c6c6c6] ${c}`} />)}
        <div className="ml-auto w-32 border-l border-[#c6c6c6] pl-9">
          <div className="h-[3px] w-3 rounded-b-full bg-[#333]" />
        </div>
      </div>
      <div className="flex min-h-0 flex-1">
        <aside className="flex w-3 shrink-0 flex-col border-r border-white bg-[#dadada]">
          <div className="mt-[290px] ml-[2px] h-4 w-0 border-l-2 border-dotted border-[#444]" />
          <div className="mt-[330px] flex h-[100px] items-center border-y-2 border-white">
            <svg width="7" height="10" viewBox="0 0 7 10"><path d="M1 0 6 5 1 10z" fill="#222" /></svg>
          </div>
          <div className="mt-[328px] ml-[2px] h-4 w-0 border-l-2 border-dotted border-[#444]" />
        </aside>
        <div className="flex min-w-0 flex-1 flex-col">
          <header className="flex h-[37px] shrink-0 items-center bg-[#b4b4b4] text-[19px] text-[#333]">
            <div className="flex h-full w-[127px] items-center border-r border-black/10 pl-[7px]">
              <button className="flex h-[27px] w-[113px] items-center rounded-md bg-[#fcfcfc] pl-3">
                <svg width="24" height="23" viewBox="0 0 24 23" className="mr-[10px]"><path d="M2 23v-7M8 23V11M14 23V5M21 23V0" stroke="#7a4513" strokeWidth="4" /></svg>
                Charts
              </button>
            </div>
            <button className="flex h-full w-[177px] items-center border-r border-black/10 pl-[17px]">
              <svg width="24" height="23" viewBox="0 0 24 23" className="mr-[11px]"><path d="M0 0h10v7H0zM0 10h10v13H0zM14 0h10v13H14zM14 16h10v7H14z" fill="#004a20" /></svg>
              Flexible Grid
            </button>
            <button className="flex h-full w-[199px] items-center border-r border-black/10 pl-[17px]">
              <svg width="24" height="23" viewBox="0 0 24 23" className="mr-[11px]"><path d="M1.500 1.500h21v20h-21zM4 8l4-3 4 4 4-3 4 2M4 14l4-3 4 4 4-3 4 2M4 18.500h16" fill="none" stroke="#1018c8" strokeWidth="2" /></svg>
              Product Depth
            </button>
            <div className="ml-auto flex h-full w-[394px] items-center border-x border-black/10 pl-[6px] whitespace-nowrap text-black">1a. Trend Trading 1-Grid (6moD) * 01/15/21</div>
            <button aria-label="Layout" className="relative flex h-full w-[104px] items-center border-r border-black/10 pl-4">
              <svg width="47" height="24" viewBox="0 0 47 24"><path d="M1 1h45v22H1zM23.500 1v22" fill="none" stroke="#0f5590" strokeWidth="2" /></svg>
              <Corner />
            </button>
            <div className="w-[11px]" />
          </header>
          <main className="flex min-h-0 flex-1">
            <LeftPanel />
            <div className="w-[7px] shrink-0 bg-[#e4e4e4]" />
            <RightPanel />
          </main>
        </div>
      </div>
    </div>
  );
}
